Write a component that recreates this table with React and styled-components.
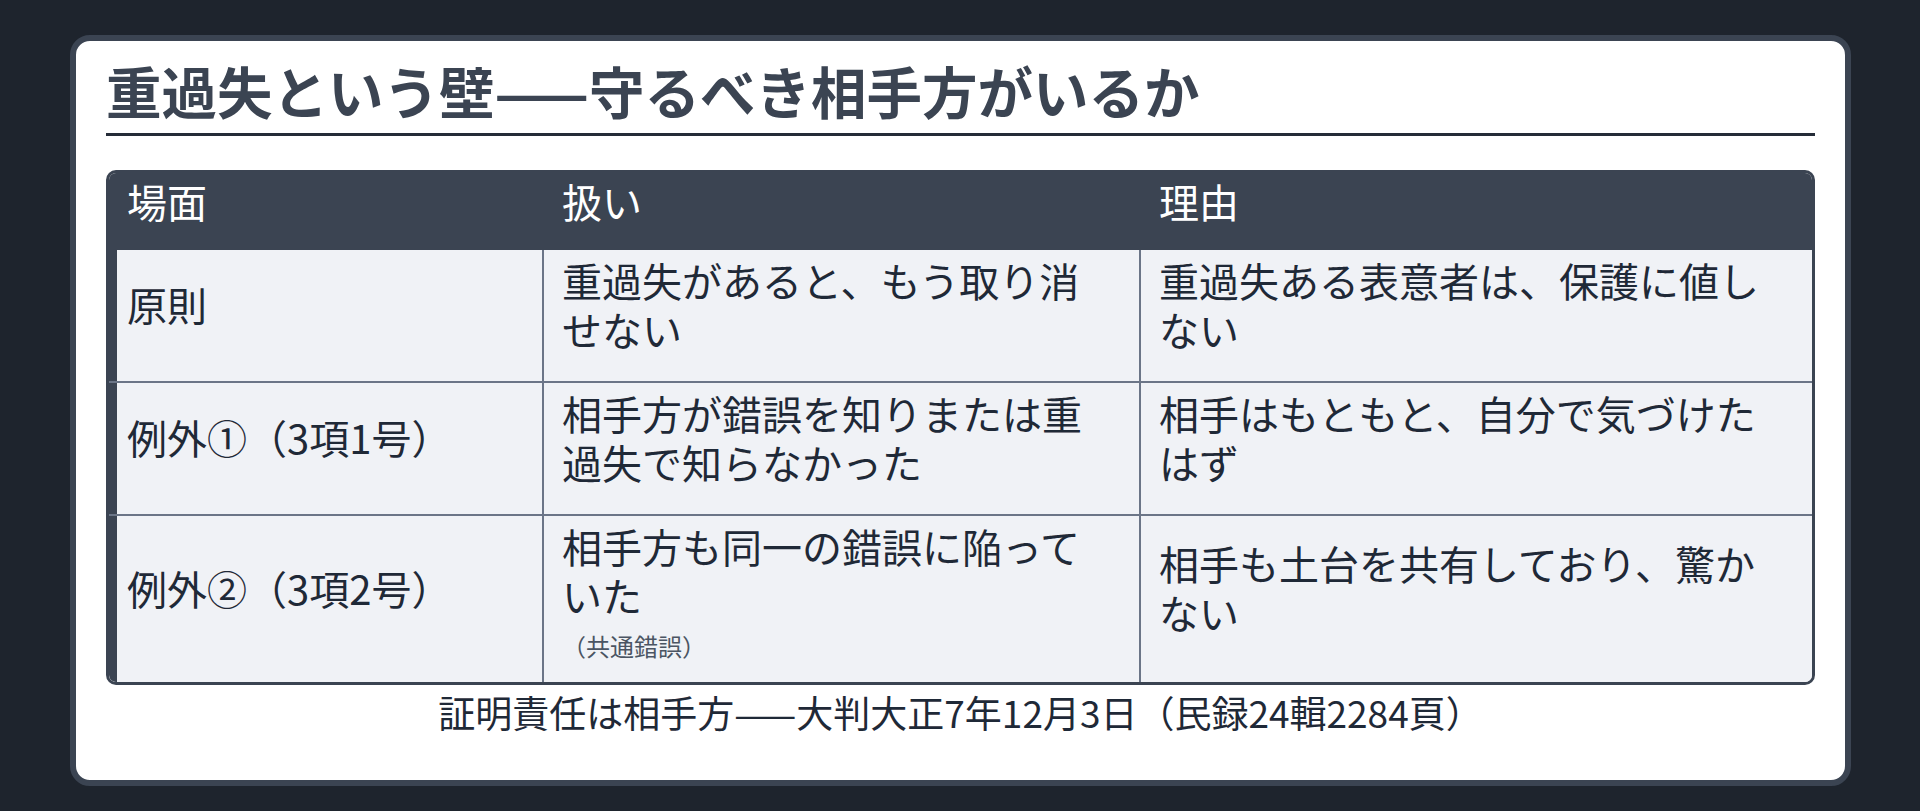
import React from 'react'
import styled, { createGlobalStyle } from 'styled-components'

const GlobalStyle = createGlobalStyle`
    html, body {
        margin: 0;
        background: #1e242d;
    }
    body {
        font-family: "Noto Sans CJK JP", "Noto Sans", sans-serif;
        color: #1f2937;
    }
    * {
        box-sizing: border-box;
    }
`

const rows = [
    {
        id: 'principle',
        scene: '原則',
        handling: '重過失があると、もう取り消せない',
        reason: '重過失ある表意者は、保護に値しない'
    },
    {
        id: 'ex1',
        scene: '例外①（3項1号）',
        handling: '相手方が錯誤を知りまたは重過失で知らなかった',
        reason: '相手はもともと、自分で気づけたはず'
    },
    {
        id: 'ex2',
        scene: '例外②（3項2号）',
        handling: '相手方も同一の錯誤に陥っていた',
        note: '（共通錯誤）',
        reason: '相手も土台を共有しており、驚かない'
    }
]

function App() {
    return (
        <>
            <GlobalStyle />
            <Page>
                <Card>
                    <Title>重過失という壁——守るべき相手方がいるか</Title>
                    <TableWrap>
                        <Table>
                            <colgroup>
                                <col style={{ width: 435 }} />
                                <col style={{ width: 597 }} />
                                <col />
                            </colgroup>
                            <thead>
                                <tr>
                                    <Th>場面</Th>
                                    <Th>扱い</Th>
                                    <Th>理由</Th>
                                </tr>
                            </thead>
                            <tbody>
                                {rows.map((row, i) => (
                                    <Row key={row.id} last={i === rows.length - 1}>
                                        <Td scene>{row.scene}</Td>
                                        <Td>
                                            {row.handling}
                                            {row.note && <Note>{row.note}</Note>}
                                        </Td>
                                        <Td end>{row.reason}</Td>
                                    </Row>
                                ))}
                            </tbody>
                        </Table>
                    </TableWrap>
                    <Caption>
                        証明責任は相手方——大判大正7年12月3日（民録24輯2284頁）
                    </Caption>
                </Card>
            </Page>
        </>
    )
}

export default App

// Css styling
const Page = styled.div`
    min-height: 100vh;
    padding: 35px 69px 0 70px;
`

const Card = styled.div`
    background: #ffffff;
    border: 6px solid #3b4452;
    border-radius: 20px;
    padding: 16px 30px 46px;
`

const Title = styled.h1`
    margin: 0;
    padding-bottom: 9px;
    border-bottom: 3px solid #252c38;
    font-size: 55.5px;
    font-weight: 700;
    line-height: 1.2;
    color: #3b4452;
`

const TableWrap = styled.div`
    margin-top: 34px;
    border: 3px solid #3b4452;
    border-radius: 10px;
    overflow: hidden;
`

const Table = styled.table`
    width: 100%;
    table-layout: fixed;
    border-collapse: separate;
    border-spacing: 0;
    font-size: 40px;
    line-height: 49px;
`

const Th = styled.th`
    background: #3b4452;
    color: #ffffff;
    font-weight: 400;
    text-align: left;
    padding: 4px 28px 24px 18px;
`

const Row = styled.tr`
    td {
        border-bottom: ${(p) => (p.last ? 'none' : '2px solid #6b7587')};
    }
`

const Td = styled.td`
    background: #f0f2f6;
    vertical-align: middle;
    padding: 6px 28px 27px 18px;
    border-right: ${(p) => (p.end ? 'none' : '2px solid #6b7587')};
    box-shadow: ${(p) => (p.scene ? 'inset 8px 0 0 #3b4452' : 'none')};
`

const Note = styled.span`
    display: block;
    margin-top: 12px;
    margin-bottom: -5px;
    font-size: 24px;
    line-height: 1.2;
    color: #4b5563;
`

const Caption = styled.div`
    margin-top: 5px;
    text-align: center;
    font-size: 37px;
    line-height: 44px;
    color: #1f2937;
`
